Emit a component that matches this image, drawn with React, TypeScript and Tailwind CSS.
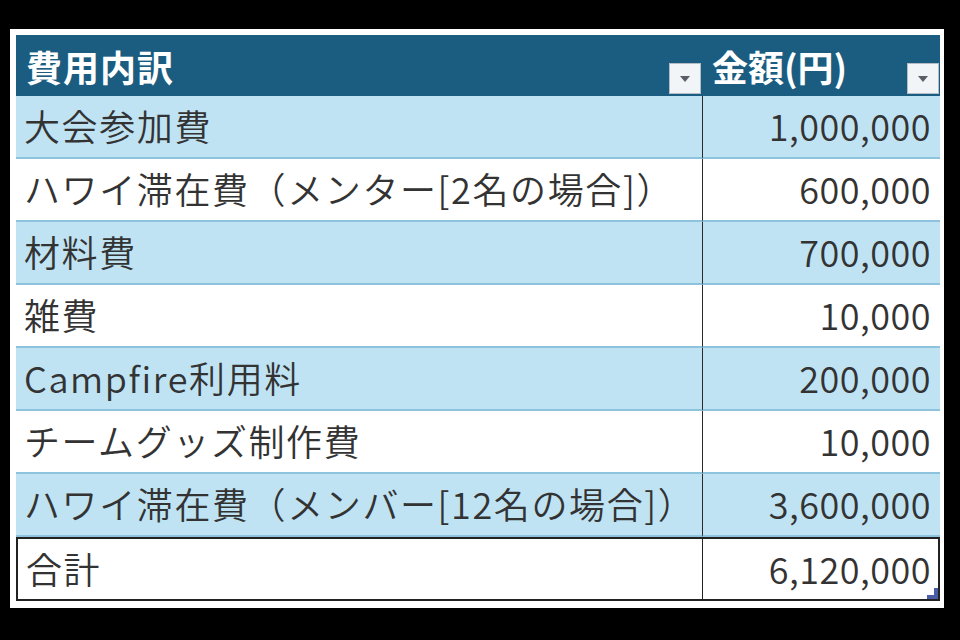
const rows: [string, string][] = [
  ['大会参加費', '1,000,000'],
  ['ハワイ滞在費（メンター[2名の場合]）', '600,000'],
  ['材料費', '700,000'],
  ['雑費', '10,000'],
  ['Campfire利用料', '200,000'],
  ['チームグッズ制作費', '10,000'],
  ['ハワイ滞在費（メンバー[12名の場合]）', '3,600,000'],
]

// Excel風のフィルターボタン
function FilterButton() {
  return (
    <span className="absolute right-[1px] bottom-[2px] w-[32px] h-[31px] bg-[#f2f5f8] border border-[#b4bcc4] flex items-center justify-center">
      <svg width="10" height="6" viewBox="0 0 10 6">
        <polygon points="0,0 10,0 5,6" fill="#5a5f66" />
      </svg>
    </span>
  )
}

export default function App() {
  return (
    <div
      className="w-[960px] h-[640px] bg-black pt-[29px] pl-[10px]"
      style={{ fontFamily: '"Noto Sans CJK JP", "Noto Sans", sans-serif' }}
    >
      <div className="w-[934px] bg-white pt-[6px] pl-[6px] pr-[4px] pb-[7px]">
        <div className="grid grid-cols-[686px_238px] text-[36px] leading-none text-[#333] font-[350]">
          <div className="relative h-[61px] bg-[#1b5d80] text-white font-bold flex items-center pl-[10px] tracking-[1px]">
            費用内訳
            <FilterButton />
          </div>
          <div className="relative h-[61px] bg-[#1b5d80] text-white font-bold flex items-center pl-[10px]">
            金額(円)
            <FilterButton />
          </div>

          {rows.map(([label, amount], i) => {
            const bg = i % 2 === 0 ? 'bg-[#bfe3f3]' : 'bg-white'
            return (
              <div key={label} className="contents">
                <div className={`h-[63px] ${bg} border-b-2 border-[#8ec3dd] flex items-center pl-[8px] pb-[3px] whitespace-nowrap tracking-[1.6px]`}>
                  {label}
                </div>
                <div className={`h-[63px] ${bg} border-b-2 border-[#8ec3dd] border-l border-l-[#2a2a2a] flex items-center justify-end pr-[9px] pb-[3px] tracking-[0.5px]`}>
                  {amount}
                </div>
              </div>
            )
          })}

          <div className="h-[64px] bg-white border-2 border-r-0 border-[#222] flex items-center pl-[8px] pb-[3px] tracking-[1.6px]">
            合計
          </div>
          <div className="relative h-[64px] bg-white border-2 border-l border-[#222] flex items-center justify-end pr-[7px] pb-[3px] tracking-[0.5px]">
            6,120,000
            <svg className="absolute right-0 bottom-0" width="11" height="11" viewBox="0 0 11 11">
              <polygon points="11,0 11,11 0,11 0,7 7,7 7,0" fill="#4a5ea8" />
            </svg>
          </div>
        </div>
      </div>
    </div>
  )
}
